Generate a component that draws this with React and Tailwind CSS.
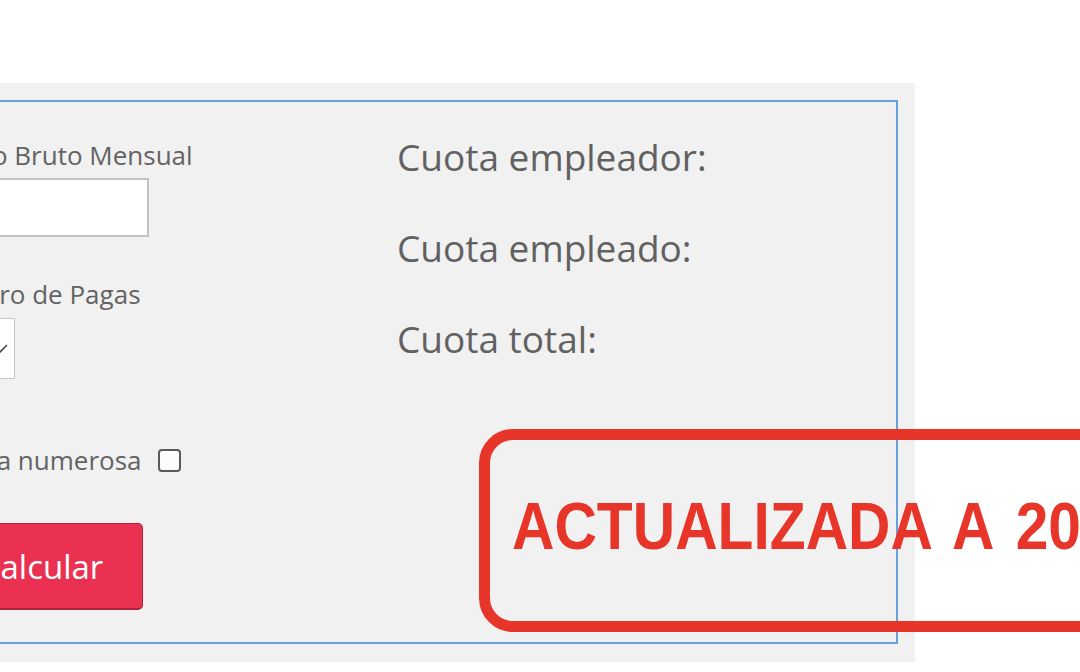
import React from "react";

function Field({ label, children, className }) {
  return (
    <div className={className}>
      <label className="block text-[26px] leading-[35px] text-[#636363]">{label}</label>
      {children}
    </div>
  );
}

function App() {
  return (
    <div className="relative w-[1080px] h-[672px] overflow-hidden bg-white font-['Open_Sans',sans-serif]">
      <div className="mt-[83px] ml-[-120px] w-[1035px] h-[579px] bg-[#f1f1f1] p-[17px]">
        <div className="flex w-[1001px] h-[544px] border-2 border-[#69a1dc]">
          {/* form */}
          <div className="w-[498px] pl-[26px] pt-[36px] shrink-0">
            <Field label="Salario Bruto Mensual">
              <input
                type="text"
                className="mt-[5px] block w-[224px] h-[59px] bg-white border-2 border-[#c3c3c3] outline-none"
              />
            </Field>
            <Field label="Número de Pagas" className="mt-[40px]">
              <div className="mt-[6px] flex items-center justify-end w-[90px] h-[61px] bg-white border border-[#c6c6c6] pr-[6px]">
                <svg width="18" height="10" viewBox="0 0 18 10" fill="none">
                  <path d="M1 1 L9 9 L17 1" stroke="#4a4a4a" strokeWidth="1.6" />
                </svg>
              </div>
            </Field>
            <div className="mt-[64px] flex items-center gap-[16px]">
              <span className="text-[26px] leading-[35px] text-[#636363]">Familia numerosa</span>
              <span className="block w-[23px] h-[23px] rounded-[4px] border-2 border-[#5a5a5a] bg-[#fbfbfb]" />
            </div>
            <button className="mt-[45px] ml-[15px] w-[203px] h-[87px] rounded-[5px] bg-[#ea3152] border border-[#b3203e] border-b-2 text-white text-[33px] leading-[45px]">
              Calcular
            </button>
          </div>

          {/* results */}
          <div className="pt-[30px] flex flex-col gap-[41px] text-[37px] leading-[50px] text-[#616161]">
            <p>Cuota empleador:</p>
            <p>Cuota empleado:</p>
            <p>Cuota total:</p>
          </div>
        </div>
      </div>

      {/* sticker over the panel */}
      <div className="absolute left-[479px] top-[429px] w-[720px] h-[203px] rounded-[34px] border-[11px] border-[#e8352a] pl-[22px] pt-[53px]">
        <div className="whitespace-nowrap font-['Liberation_Sans',Arial,sans-serif] font-bold text-[66px] leading-none [word-spacing:8px] text-[#e8352a] scale-x-[0.89] origin-left">
          ACTUALIZADA A 2024
        </div>
      </div>
    </div>
  );
}

export default App;
